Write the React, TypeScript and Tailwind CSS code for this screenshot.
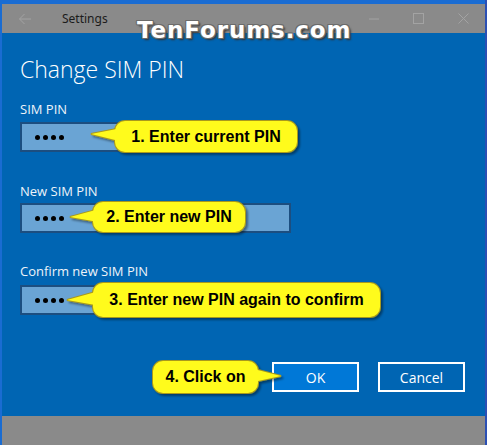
import React from "react";

type C = { x: number; y: number; w: number; h: number; tx: number; ty: number; side: "l" | "r"; text: string };

const callouts: C[] = [
  { x: 115, y: 121, w: 182, h: 31, tx: 91, ty: 134, side: "l", text: "1. Enter current PIN" },
  { x: 93, y: 202, w: 152, h: 30, tx: 70, ty: 217, side: "l", text: "2. Enter new PIN" },
  { x: 93, y: 283, w: 287, h: 34, tx: 67, ty: 300, side: "l", text: "3. Enter new PIN again to confirm" },
  { x: 153, y: 361, w: 105, h: 32, tx: 281, ty: 376, side: "r", text: "4. Click on" },
];

function wedge(c: C) {
  const ex = c.side === "l" ? c.x + 8 : c.x + c.w - 8;
  const y1 = c.y + c.h * 0.22;
  const y2 = c.y + c.h * 0.68;
  return `M${ex},${y1} L${c.tx},${c.ty} L${ex},${y2} Z`;
}

function Overlay() {
  return (
    <svg className="absolute left-0 top-0 pointer-events-none" width={487} height={445}>
      <defs>
        <filter id="sh" x="-10%" y="-30%" width="130%" height="180%">
          <feDropShadow dx="2" dy="2" stdDeviation="1.2" floodColor="#000" floodOpacity="0.4" />
        </filter>
      </defs>
      {callouts.map((c, i) => (
        <g key={i} filter="url(#sh)">
          <rect x={c.x} y={c.y} width={c.w} height={c.h} rx={10} fill="#fffb1e" stroke="#a9991c" strokeWidth={2} />
          <path d={wedge(c)} fill="#fffb1e" stroke="#a9991c" strokeWidth={2} strokeLinejoin="miter" />
          <rect x={c.x} y={c.y} width={c.w} height={c.h} rx={10} fill="#fffb1e" />
          <path d={wedge(c)} fill="#fffb1e" />
        </g>
      ))}
    </svg>
  );
}

function Dots() {
  return (
    <div className="flex gap-[3px] pl-[13px]">
      <div className="w-[5px] h-[5px] rounded-full bg-black" />
      <div className="w-[5px] h-[5px] rounded-full bg-black" />
      <div className="w-[5px] h-[5px] rounded-full bg-black" />
      <div className="w-[5px] h-[5px] rounded-full bg-black" />
    </div>
  );
}

function Field({ label, mt, gap }: { label: string; mt: string; gap: string }) {
  return (
    <div className={mt}>
      <div className="text-[13px] leading-[18px] text-[#eef3f9]">{label}</div>
      <div className={`${gap} w-[271px] h-[30px] bg-[#6aa4d4] border-2 border-[#1c4e80] flex items-center`}>
        <Dots />
      </div>
    </div>
  );
}

export default function App() {
  return (
    <div className="relative w-[487px] h-[445px] bg-[#1a6cd2] pt-[4px] pl-[2px] border-r-2 border-[#2b4fb3] flex flex-col overflow-hidden [font-family:'Open_Sans','Noto_Sans',sans-serif]">
      {/* title bar */}
      <div className="h-[29px] bg-[#8a8a8a] flex items-center relative">
        <svg className="absolute left-[16px] top-[9px]" width="14" height="12" viewBox="0 0 14 12">
          <path d="M13 6H1.5M6.5 1L1.5 6l5 5" fill="none" stroke="#a3a3a3" strokeWidth="1" />
        </svg>
        <div className="absolute left-[60px] top-[6px] text-[12px] text-[#1b1b1b] [font-family:'Noto_Sans',sans-serif]">Settings</div>
        <svg className="absolute left-[367px] top-[14px]" width="11" height="2" viewBox="0 0 11 2">
          <path d="M0 1H10" stroke="#a3a3a3" strokeWidth="1" />
        </svg>
        <svg className="absolute left-[411px] top-[9px]" width="11" height="11" viewBox="0 0 11 11">
          <rect x="0.5" y="0.5" width="10" height="10" fill="none" stroke="#a3a3a3" strokeWidth="1" />
        </svg>
        <svg className="absolute left-[456px] top-[9px]" width="11" height="11" viewBox="0 0 11 11">
          <path d="M0.5 0.5L10.5 10.5M10.5 0.5L0.5 10.5" stroke="#a3a3a3" strokeWidth="1" />
        </svg>
      </div>

      {/* content */}
      <div className="flex-1 bg-[#0065b3] pl-[18px] pr-[18px] flex flex-col">
        <div className="mt-[21px] text-[23px] leading-[30px] font-light text-white">Change SIM PIN</div>
        <Field label="SIM PIN" mt="mt-[16px]" gap="mt-[4px]" />
        <Field label="New SIM PIN" mt="mt-[30px]" gap="mt-[3px]" />
        <Field label="Confirm new SIM PIN" mt="mt-[29px]" gap="mt-[5px]" />
        <div className="mt-[47px] flex justify-end gap-[19px] pr-[2px]">
          <div className="w-[87px] h-[30px] bg-[#0078d7] border-2 border-white flex items-center justify-center text-[14px] text-white">OK</div>
          <div className="w-[87px] h-[30px] border-2 border-white flex items-center justify-center text-[14px] text-white">Cancel</div>
        </div>
      </div>

      {/* bottom bar */}
      <div className="h-[29px] bg-[#8a8a8a]" />

      <Overlay />
      {callouts.map((c, i) => (
        <div
          key={i}
          className="absolute flex items-center justify-center text-[16px] font-bold text-black [font-family:'Liberation_Sans',Arial,sans-serif]"
          style={{ left: c.x, top: c.y, width: c.w, height: c.h }}
        >
          {c.text}
        </div>
      ))}

      {/* watermark */}
      <div className="absolute left-[137px] top-[16px] text-[23px] leading-[28px] font-bold tracking-[0.9px] text-white [font-family:'DejaVu_Sans',sans-serif] [text-shadow:1px_0_0_#6b6b6b,-1px_0_0_#6b6b6b,0_1px_0_#6b6b6b,0_-1px_0_#6b6b6b,1px_1px_0_#6b6b6b,-1px_-1px_0_#6b6b6b,1px_-1px_0_#6b6b6b,-1px_1px_0_#6b6b6b,2px_2px_2px_#333]">
        TenForums.com
      </div>
    </div>
  );
}
